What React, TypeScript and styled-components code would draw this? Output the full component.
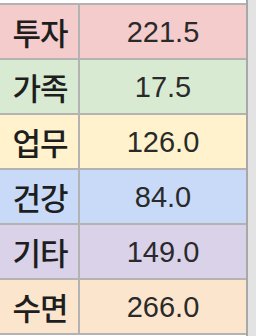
import React from "react";
import styled, { createGlobalStyle } from "styled-components";

const Global = createGlobalStyle`
  html, body { margin: 0; padding: 0; background: #ffffff; }
`;

const Page = styled.div`
  width: 256px;
  height: 336px;
  display: flex;
  overflow: hidden;
  background: #ffffff;
`;

const Sheet = styled.div`
  width: 248px;
  padding-top: 3px;
  display: flex;
  flex-direction: column;
`;

const Table = styled.div`
  border-top: 2px solid #b3b3b3;
  display: flex;
  flex-direction: column;
`;

const Row = styled.div<{ $bg: string }>`
  display: grid;
  grid-template-columns: 80px 1fr;
  height: 53px;
  border-bottom: 2px solid #b3b3b3;
  background: ${(p) => p.$bg};
`;

const LabelCell = styled.div`
  border-right: 2px solid #b3b3b3;
  display: flex;
  align-items: center;
  justify-content: center;
  font-family: "Noto Sans CJK KR", "Noto Sans", sans-serif;
  font-weight: 500;
  font-size: 31px;
  letter-spacing: -1px;
  color: #1e1e1e;
  padding-left: 2px;
`;

const ValueCell = styled.div`
  display: flex;
  align-items: center;
  justify-content: center;
  font-family: "Liberation Sans", Arial, sans-serif;
  font-size: 29px;
  color: #2a2a2a;
  padding-top: 2px;
`;

const Gutter = styled.div`
  width: 8px;
  border-left: 2px solid #a8a8a8;
  background: #e3e3e3;
`;

const rows = [
  { label: "투자", value: "221.5", bg: "#f4cccc" },
  { label: "가족", value: "17.5", bg: "#d9ead3" },
  { label: "업무", value: "126.0", bg: "#fff2cc" },
  { label: "건강", value: "84.0", bg: "#c9daf8" },
  { label: "기타", value: "149.0", bg: "#d9d2e9" },
  { label: "수면", value: "266.0", bg: "#fce5cd" },
];

export default function App() {
  return (
    <>
      <Global />
      <Page>
        <Sheet>
          <Table>
            {rows.map((r) => (
              <Row key={r.label} $bg={r.bg}>
                <LabelCell>{r.label}</LabelCell>
                <ValueCell>{r.value}</ValueCell>
              </Row>
            ))}
          </Table>
        </Sheet>
        <Gutter />
      </Page>
    </>
  );
}
